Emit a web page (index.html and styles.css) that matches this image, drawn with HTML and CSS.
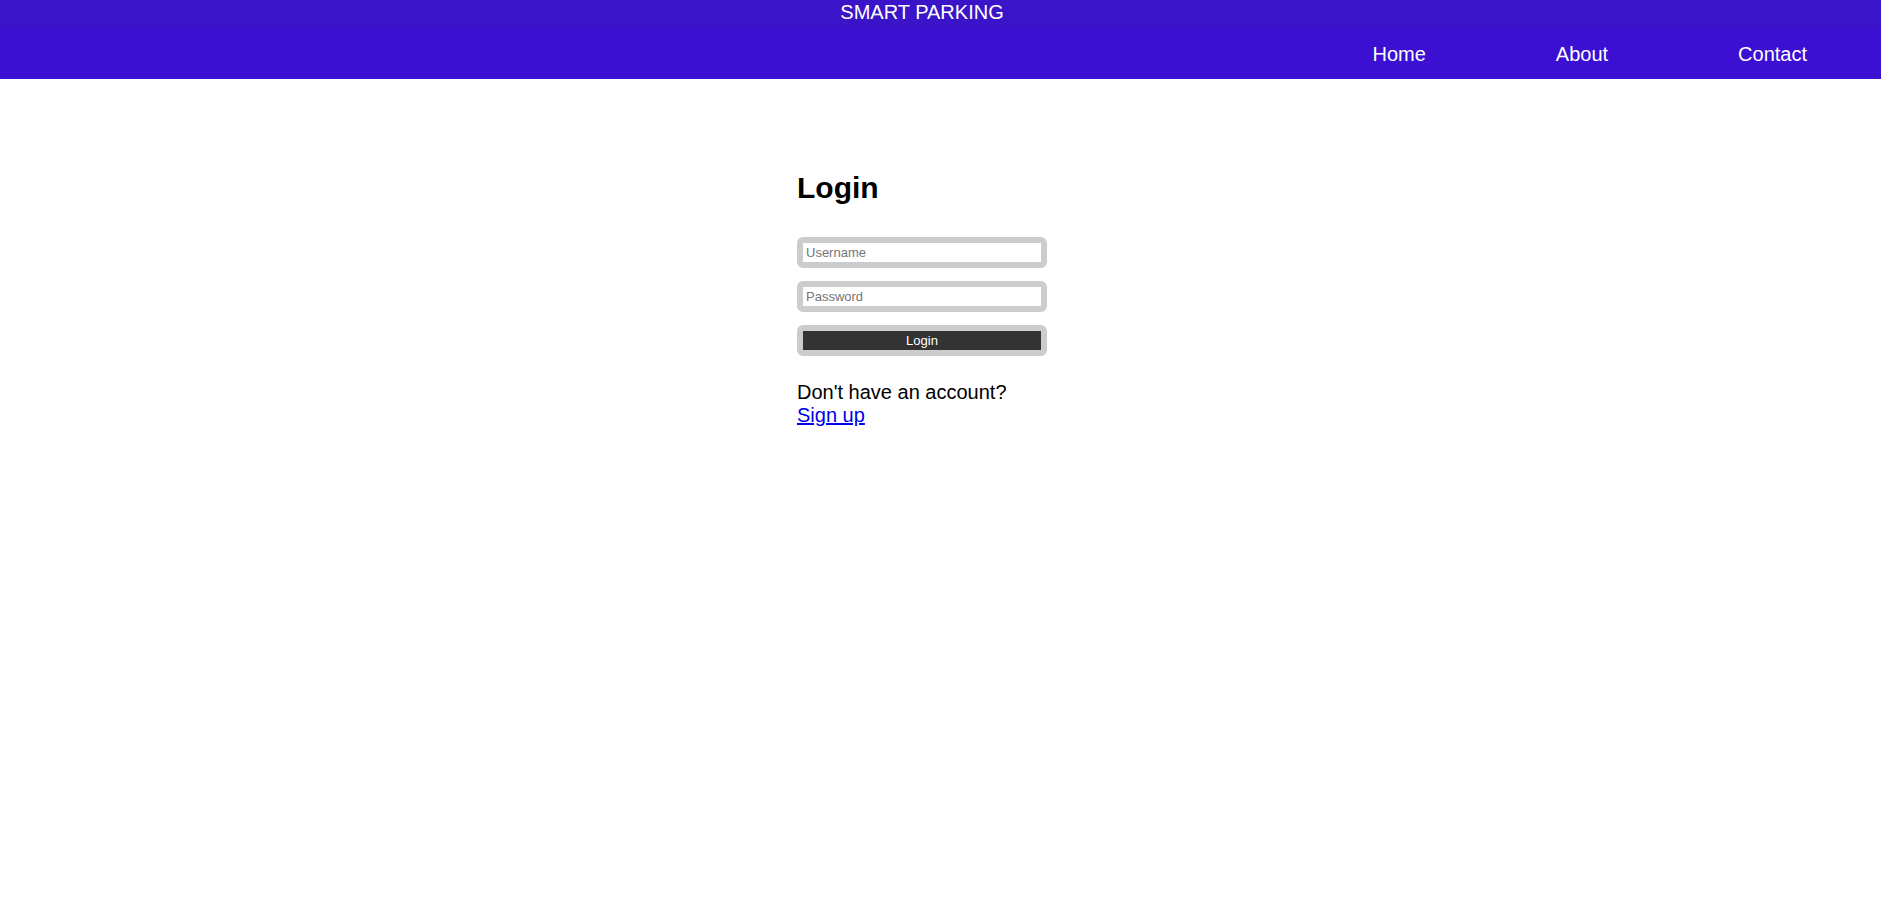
FILE: index.html
```html
<!DOCTYPE html>
<html lang="en">
<head>
<meta charset="utf-8">
<title>Smart Parking - Login</title>
<link rel="stylesheet" href="styles.css">
</head>
<body>
<header class="site-header">
  <div class="brand-row">
    <span class="brand">SMART PARKING</span>
  </div>
  <nav class="nav-row">
    <a class="nav-link" href="#">Home</a>
    <a class="nav-link" href="#">About</a>
    <a class="nav-link" href="#">Contact</a>
  </nav>
</header>
<main class="page">
  <div class="login-box">
    <h2 class="login-title">Login</h2>
    <form class="login-form">
      <input class="field" type="text" placeholder="Username">
      <input class="field" type="password" placeholder="Password">
      <button class="field submit" type="button">Login</button>
    </form>
    <p class="signup">Don't have an account?<br><a href="#" class="signup-link">Sign up</a></p>
  </div>
</main>
</body>
</html>
```
FILE: styles.css
```css
html, body {
  margin: 0;
  padding: 0;
  background: #ffffff;
}
body {
  font-family: "Liberation Sans", Arial, sans-serif;
  font-size: 20px;
  color: #000;
}
.site-header {
  display: flex;
  flex-direction: column;
}
.brand-row {
  height: 29px;
  background: #3a14c8;
  display: flex;
  justify-content: center;
  align-items: flex-start;
  padding-right: 37px;
  box-sizing: border-box;
}
.brand {
  color: #fff;
  font-size: 20px;
  line-height: 23px;
  margin-top: 1px;
}
.nav-row {
  height: 50px;
  background: #3b10d2;
  display: flex;
  justify-content: flex-end;
  align-items: center;
  gap: 130px;
  padding-right: 74px;
}
.nav-link {
  color: #fff;
  text-decoration: none;
  font-size: 20px;
  line-height: 23px;
}
.page {
  display: flex;
  justify-content: center;
  padding-top: 92px;
  padding-right: 37px;
}
.login-box {
  width: 250px;
}
.login-title {
  margin: 0 0 32px 0;
  font-size: 30px;
  font-weight: bold;
  line-height: 34px;
}
.login-form {
  display: flex;
  flex-direction: column;
  gap: 13px;
  margin: 0;
}
.field {
  box-sizing: border-box;
  width: 250px;
  height: 31px;
  margin: 0;
  border: 6px solid #cccccc;
  border-radius: 6px;
  padding: 0 3px;
  font-family: "Liberation Sans", Arial, sans-serif;
  font-size: 13px;
  background: #fff;
  color: #000;
  outline: none;
}
.field::placeholder {
  color: #757575;
}
.submit {
  background: #333333;
  color: #fff;
  text-align: center;
  cursor: pointer;
}
.signup {
  margin: 25px 0 0 0;
  font-size: 20px;
  line-height: 23px;
}
.signup-link {
  color: #0000ee;
  text-decoration: underline;
}
```
